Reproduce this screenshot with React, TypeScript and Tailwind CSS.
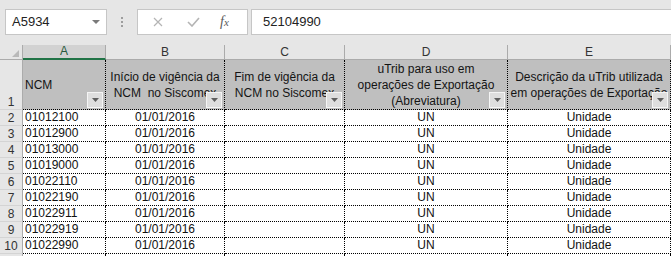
import React from 'react';

const codes = [
    '01012100',
    '01012900',
    '01013000',
    '01019000',
    '01022110',
    '01022190',
    '01022911',
    '01022919',
    '01022990',
];

const FilterButton = () => (
    <div className="absolute right-[2px] bottom-[1px] w-[16px] h-[16px] bg-[#dedede] border border-[#f4f4f4] flex items-center justify-center">
        <svg width="7" height="4" viewBox="0 0 7 4">
            <path d="M0 0h7L3.5 4z" fill="#5f5f5f" />
        </svg>
    </div>
);

const HeaderCell = ({ children, left = false }: { children: React.ReactNode; left?: boolean }) => (
    <div
        className={`relative h-[50px] bg-[#bfbfbf] border-r border-b border-dotted border-black overflow-hidden flex items-center ${left ? 'justify-start pl-[2px]' : 'justify-center'}`}
    >
        <div className="whitespace-pre text-center text-[12px] leading-[16px] text-[#141414] pt-[1px]">{children}</div>
        <FilterButton />
    </div>
);

const ColLetter = ({ label, selected = false }: { label: string; selected?: boolean }) =>
    selected ? (
        <div className="h-[15px] bg-[#d2d2d2] border-r border-[#ababab] border-b-2 border-b-[#217346] flex items-center justify-center text-[12px] leading-[13px] text-[#2a5a3e]">
            {label}
        </div>
    ) : (
        <div className="h-[15px] bg-[#e6e6e6] border-r border-[#ababab] border-b border-b-[#ababab] flex items-center justify-center text-[12px] leading-[14px] text-[#333]">
            {label}
        </div>
    );

const RowNum = ({ n, tall = false }: { n?: number; tall?: boolean }) => (
    <div
        className={`${tall ? 'h-[50px]' : 'h-[16px]'} bg-[#e6e6e6] border-r border-[#ababab] border-b border-b-[#d4d4d4] flex items-end justify-center text-[12px] leading-[14px] text-[#333]`}
    >
        {n}
    </div>
);

const dataCell = 'h-[16px] border-r border-b border-dotted border-black text-[12px] leading-[15px] text-[#111] flex items-end overflow-hidden whitespace-nowrap';

export default function App() {
    return (
        <div className="w-[671px] h-[256px] overflow-hidden bg-white font-['Liberation_Sans',Arial,sans-serif]">
            {/* formula bar */}
            <div className="h-[45px] bg-[#e6e6e6] flex items-start pt-[9px] pl-[5px]">
                <div className="w-[102px] h-[26px] bg-white border border-[#c6c6c6] flex items-center justify-between pl-[6px] pr-[6px]">
                    <span className="text-[13px] text-[#222]">A5934</span>
                    <svg width="8" height="4" viewBox="0 0 8 4">
                        <path d="M0 0h8L4 4z" fill="#7a7a7a" />
                    </svg>
                </div>
                <div className="w-[30px] h-[26px] flex flex-col items-center justify-center gap-[2px]">
                    <span className="w-[2px] h-[2px] bg-[#9d9d9d]" />
                    <span className="w-[2px] h-[2px] bg-[#9d9d9d]" />
                    <span className="w-[2px] h-[2px] bg-[#9d9d9d]" />
                </div>
                <div className="w-[111px] h-[26px] bg-white border border-[#c6c6c6] flex items-center pl-[15px]">
                    <svg width="10" height="10" viewBox="0 0 10 10" className="mr-[24px]">
                        <path d="M1 1l8 8M9 1l-8 8" stroke="#b4b4b4" strokeWidth="1.2" />
                    </svg>
                    <svg width="13" height="10" viewBox="0 0 13 10" className="mr-[20px]">
                        <path d="M1 5l4 4L12 1" stroke="#b4b4b4" strokeWidth="1.6" fill="none" />
                    </svg>
                    <span className="font-['Liberation_Serif',serif] italic text-[14px] text-[#5a5a5a] leading-none">
                        f<span className="text-[11px]">x</span>
                    </span>
                </div>
                <div className="flex-1 ml-[3px] h-[26px] bg-white border-y border-l border-[#c6c6c6] flex items-center pl-[11px]">
                    <span className="text-[13px] text-[#222]">52104990</span>
                </div>
            </div>

            {/* sheet */}
            <div className="grid grid-cols-[23px_83px_119px_120px_163px_163px]">
                <div className="h-[15px] bg-[#e6e6e6] border-r border-[#ababab] border-b border-b-[#ababab] flex items-end justify-end pr-[3px] pb-[2px]">
                    <svg width="7" height="7" viewBox="0 0 7 7">
                        <path d="M7 0v7H0z" fill="#b9b9b9" />
                    </svg>
                </div>
                <ColLetter label="A" selected />
                <ColLetter label="B" />
                <ColLetter label="C" />
                <ColLetter label="D" />
                <ColLetter label="E" />

                <RowNum n={1} tall />
                <HeaderCell left>NCM</HeaderCell>
                <HeaderCell>{'Início de vigência da\nNCM  no Siscomex'}</HeaderCell>
                <HeaderCell>{'Fim de vigência da\nNCM no Siscomex'}</HeaderCell>
                <HeaderCell>{'uTrib para uso em\noperações de Exportação\n(Abreviatura)'}</HeaderCell>
                <HeaderCell>{'Descrição da uTrib utilizada\nem operações de Exportação'}</HeaderCell>

                {codes.map((code, i) => (
                    <React.Fragment key={code}>
                        <RowNum n={i + 2} />
                        <div className={`${dataCell} pl-[2px]`}>{code}</div>
                        <div className={`${dataCell} justify-center`}>01/01/2016</div>
                        <div className={dataCell} />
                        <div className={`${dataCell} justify-center`}>UN</div>
                        <div className={`${dataCell} justify-center`}>Unidade</div>
                    </React.Fragment>
                ))}

                {/* next row, only its top edge is in view */}
                <RowNum />
                <div className={dataCell} />
                <div className={dataCell} />
                <div className={dataCell} />
                <div className={dataCell} />
                <div className={dataCell} />
            </div>
        </div>
    );
}
